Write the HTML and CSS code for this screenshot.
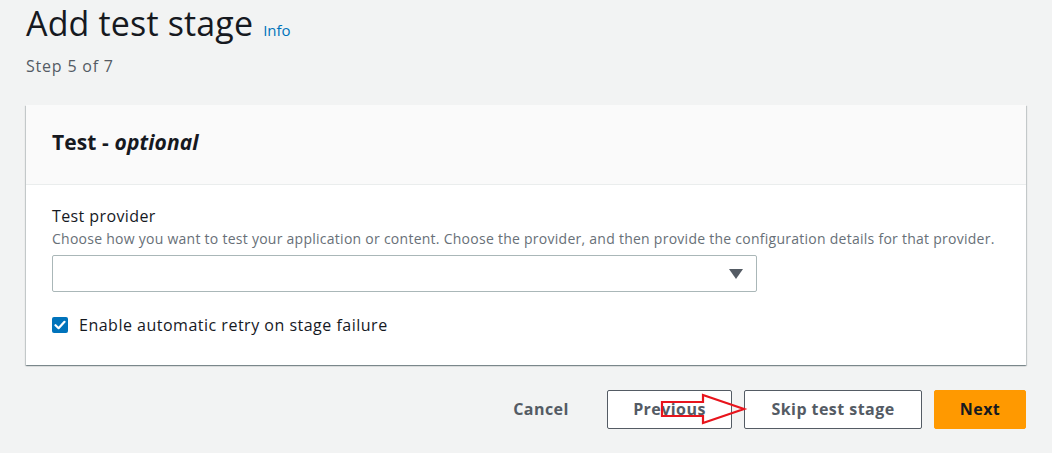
FILE: index.html
```html
<!DOCTYPE html>
<html>
<head>
<meta charset="utf-8">
<link rel="stylesheet" href="styles.css">
</head>
<body>
<div class="page">
  <div class="header">
    <h1 class="title">Add test stage</h1>
    <a class="info">Info</a>
  </div>
  <div class="step">Step 5 of 7</div>

  <div class="card">
    <div class="card-head">
      <h2>Test - <em>optional</em></h2>
    </div>
    <div class="card-body">
      <div class="label">Test provider</div>
      <div class="desc">Choose how you want to test your application or content. Choose the provider, and then provide the configuration details for that provider.</div>
      <div class="select"><span class="caret"></span></div>
      <label class="check">
        <span class="box"><svg width="12" height="10" viewBox="0 0 12 10"><path d="M1.5 5.2 L4.6 8.2 L10.5 1.8" fill="none" stroke="#fff" stroke-width="2.2" stroke-linecap="round" stroke-linejoin="round"/></svg></span>
        <span>Enable automatic retry on stage failure</span>
      </label>
    </div>
  </div>

  <div class="actions">
    <button class="btn link">Cancel</button>
    <button class="btn normal prev">Previous</button>
    <button class="btn normal skip">Skip test stage</button>
    <button class="btn primary">Next</button>
    <svg class="arrow" width="90" height="34" viewBox="0 0 90 34"><polygon points="3,10 44,10 44,3 85,17 44,31 44,24 3,24" fill="none" stroke="#e8141c" stroke-width="2.2"/></svg>
  </div>
</div>
</body>
</html>
```
FILE: styles.css
```css
* { box-sizing: border-box; }
body {
  margin: 0;
  background: #f2f3f3;
  font-family: "Open Sans", "Noto Sans", Arial, sans-serif;
  color: #16191f;
}
.page {
  padding: 0 26px;
}
.header {
  display: flex;
  align-items: baseline;
  gap: 10px;
  height: 48px;
  padding-top: 1px;
}
.title {
  margin: 0;
  font-weight: 400;
  font-size: 34px;
  line-height: 44px;
  letter-spacing: 0.15px;
}
.info {
  color: #0073bb;
  font-size: 15px;
  font-weight: 400;
}
.step {
  font-size: 16px;
  color: #545b64;
  line-height: 22px;
  margin-top: 7px;
  letter-spacing: 0.8px;
}
.card {
  margin-top: 28px;
  background: #fff;
  box-shadow: 0 1px 1px 0 rgba(0,28,36,0.3), 1px 1px 1px 0 rgba(0,28,36,0.15), -1px 1px 1px 0 rgba(0,28,36,0.15);
  height: 260px;
}
.card-head {
  background: #fafafa;
  border-bottom: 1px solid #eaeded;
  height: 80px;
  padding: 23px 26px 0;
}
.card-head h2 {
  margin: 0;
  font-size: 21px;
  line-height: 28px;
  font-weight: 700;
  letter-spacing: 0.1px;
}
.card-head em { font-style: italic; }
.card-body {
  padding: 20px 26px 0;
}
.label {
  font-size: 16px;
  line-height: 22px;
  letter-spacing: 0.4px;
}
.desc {
  font-size: 14px;
  color: #687078;
  line-height: 20px;
  letter-spacing: 0.26px;
  white-space: nowrap;
  margin-top: 2px;
}
.select {
  margin-top: 6px;
  width: 705px;
  height: 37px;
  border: 1px solid #aab7b8;
  border-radius: 2px;
  background: #fff;
  position: relative;
}
.caret {
  position: absolute;
  right: 13px;
  top: 13px;
  width: 0;
  height: 0;
  border-left: 7px solid transparent;
  border-right: 7px solid transparent;
  border-top: 10px solid #545b64;
}
.check {
  display: flex;
  align-items: center;
  gap: 11px;
  margin-top: 22px;
  font-size: 16px;
  line-height: 22px;
  letter-spacing: 0.5px;
}
.box {
  width: 16px;
  height: 16px;
  border-radius: 2px;
  background: #0073bb;
  display: flex;
  align-items: center;
  justify-content: center;
}
.actions {
  position: relative;
  display: flex;
  justify-content: flex-end;
  align-items: center;
  gap: 12px;
  margin-top: 25px;
}
.btn {
  font-family: inherit;
  font-size: 16px;
  font-weight: 700;
  height: 39px;
  border-radius: 2px;
  padding: 0 0 2px;
  cursor: pointer;
  letter-spacing: 0.45px;
}
.btn.link {
  background: transparent;
  border: 1px solid transparent;
  color: #545b64;
  width: 90px;
  margin-right: 9px;
}
.btn.normal {
  background: #fff;
  border: 1px solid #545b64;
  color: #545b64;
}
.btn.prev { width: 125px; }
.btn.skip { width: 178px; }
.btn.primary {
  background: #ff9900;
  border: 1px solid #ff9900;
  color: #16191f;
  width: 92px;
}
.arrow {
  position: absolute;
  left: 633px;
  top: 2px;
}
```
